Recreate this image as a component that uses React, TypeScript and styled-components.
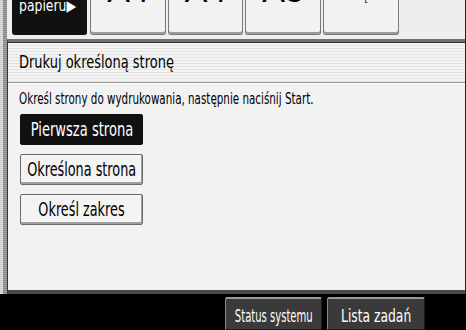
import React from "react";
import styled, { createGlobalStyle } from "styled-components";

const Global = createGlobalStyle`
  html, body { margin: 0; padding: 0; background: #000; }
  body { font-family: "DejaVu Sans Condensed", "DejaVu Sans", sans-serif; }
  * { box-sizing: border-box; }
`;

const Screen = styled.div`
  width: 466px;
  height: 330px;
  background: #000;
  display: flex;
  flex-direction: column;
  overflow: hidden;
`;

const Main = styled.div`
  height: 294px;
  display: flex;
  background: #eeeeee;
  border-right: 1px solid #222;
`;

const LeftStrip = styled.div`
  width: 7px;
  border-left: 3px solid #d4d4d4;
  background: repeating-linear-gradient(to bottom, #858585 0 1px, #a4a4a4 1px 2px);
`;

const Content = styled.div`
  flex: 1;
  display: flex;
  flex-direction: column;
  min-width: 0;
`;

const TopBar = styled.div`
  height: 39px;
  display: flex;
  gap: 2px;
  padding-left: 5px;
  overflow: hidden;
  background: #eeeeee;
`;

const Tab = styled.div<{ $dark?: boolean; $w: number; $gapAfter?: number }>`
  width: ${(p) => p.$w}px;
  height: 35px;
  flex: none;
  margin-right: ${(p) => p.$gapAfter ?? 0}px;
  display: flex;
  flex-direction: column;
  justify-content: flex-end;
  align-items: center;
  overflow: hidden;
  border-radius: 0 0 3px 3px;
  background: ${(p) => (p.$dark ? "#111" : "#f2f2f2")};
  border: 1px solid ${(p) => (p.$dark ? "#111" : "#7a7a7a")};
  border-top: none;
  box-shadow: ${(p) => (p.$dark ? "none" : "inset 0 -2px 0 #9a9a9a")};
  color: ${(p) => (p.$dark ? "#fff" : "#000")};
`;

const TabSmall = styled.div`
  font-size: 15px;
  line-height: 15px;
  align-self: flex-start;
  padding-left: 6px;
  margin-bottom: 20px;
  white-space: nowrap;
`;

const TabBig = styled.div`
  font-family: "Liberation Sans", Arial, sans-serif;
  font-size: 34px;
  line-height: 34px;
  margin-bottom: 27px;
  white-space: nowrap;
`;

const TabTiny = styled.div`
  font-size: 13px;
  line-height: 13px;
  margin-bottom: 32px;
  white-space: nowrap;
`;

const Narrow = styled.span<{ $s: number; $origin?: string }>`
  display: inline-block;
  white-space: nowrap;
  transform: scaleX(${(p) => p.$s});
  transform-origin: ${(p) => p.$origin ?? "left"} center;
`;

const Panel = styled.div`
  flex: 1;
  display: flex;
  flex-direction: column;
  background: #f2f2f2;
  border-top: 3px solid #707070;
  border-left: 1px solid #333;
  border-bottom: 4px solid #4a4a4a;
  &::before {
    content: "";
    display: block;
    height: 1px;
    background: #303030;
  }
`;

const TitleRow = styled.div`
  height: 40px;
  display: flex;
  align-items: center;
  padding: 0 0 1px 11px;
  font-size: 17px;
  line-height: 17px;
  color: #000;
  background: repeating-linear-gradient(to bottom, #f4f4f4 0 2px, #e3e3e3 2px 3px);
  border-bottom: 1px solid #9a9a9a;
  box-shadow: 0 1px 0 #ffffff;
`;

const Body = styled.div`
  flex: 1;
  display: flex;
  flex-direction: column;
  align-items: flex-start;
  padding: 9px 0 0 11px;
`;

const Instruction = styled.div`
  font-size: 15px;
  line-height: 15px;
  color: #000;
  margin-bottom: 7px;
`;

const Options = styled.div`
  display: flex;
  flex-direction: column;
  gap: 9px;
  margin-left: 1px;
`;

const OptionButton = styled.div<{ $selected?: boolean }>`
  width: 123px;
  height: 31px;
  display: flex;
  align-items: center;
  justify-content: center;
  font-size: 19px;
  line-height: 19px;
  border-radius: 2px;
  background: ${(p) => (p.$selected ? "#111" : "#f4f4f4")};
  color: ${(p) => (p.$selected ? "#fff" : "#000")};
  border: 1px solid ${(p) => (p.$selected ? "#111" : "#6a6a6a")};
  box-shadow: ${(p) => (p.$selected ? "none" : "inset -1px -2px 0 #a0a0a0")};
`;

const BottomBar = styled.div`
  height: 36px;
  display: flex;
  align-items: flex-start;
  padding: 3px 0 0 225px;
  gap: 5px;
  background: #000;
`;

const SysButton = styled.div<{ $w: number }>`
  width: ${(p) => p.$w}px;
  height: 33px;
  display: flex;
  align-items: flex-end;
  justify-content: center;
  padding-bottom: 4px;
  font-size: 18px;
  line-height: 18px;
  color: #fff;
  background: #3a3a3a;
  border: 1px solid #1a1a1a;
  border-top: 2px solid #9a9a9a;
  border-left: 1px solid #8a8a8a;
  border-radius: 2px 2px 0 0;
`;

export default function App() {
  return (
    <>
      <Global />
      <Screen>
        <Main>
          <LeftStrip />
          <Content>
            <TopBar>
              <Tab $dark $w={75} $gapAfter={1}>
                <TabSmall>
                  <Narrow $s={0.92}>Format</Narrow>
                  <br />
                  <Narrow $s={0.92}>papieru▶</Narrow>
                </TabSmall>
              </Tab>
              <Tab $w={76}>
                <TabBig>A4</TabBig>
              </Tab>
              <Tab $w={75}>
                <TabBig>A4</TabBig>
              </Tab>
              <Tab $w={76}>
                <TabBig>A5</TabBig>
              </Tab>
              <Tab $w={76}>
                <TabTiny>Taca ręczna</TabTiny>
              </Tab>
            </TopBar>
            <Panel>
              <TitleRow>
                <Narrow $s={0.85}>Drukuj określoną stronę</Narrow>
              </TitleRow>
              <Body>
                <Instruction>
                  <Narrow $s={0.767}>Określ strony do wydrukowania, następnie naciśnij Start.</Narrow>
                </Instruction>
                <Options>
                  <OptionButton $selected>
                    <Narrow $s={0.765} $origin="center">Pierwsza strona</Narrow>
                  </OptionButton>
                  <OptionButton>
                    <Narrow $s={0.75} $origin="center">Określona strona</Narrow>
                  </OptionButton>
                  <OptionButton>
                    <Narrow $s={0.75} $origin="center">Określ zakres</Narrow>
                  </OptionButton>
                </Options>
              </Body>
            </Panel>
          </Content>
        </Main>
        <BottomBar>
          <SysButton $w={97}>
            <Narrow $s={0.62} $origin="center">Status systemu</Narrow>
          </SysButton>
          <SysButton $w={98}>
            <Narrow $s={0.76} $origin="center">Lista zadań</Narrow>
          </SysButton>
        </BottomBar>
      </Screen>
    </>
  );
}
